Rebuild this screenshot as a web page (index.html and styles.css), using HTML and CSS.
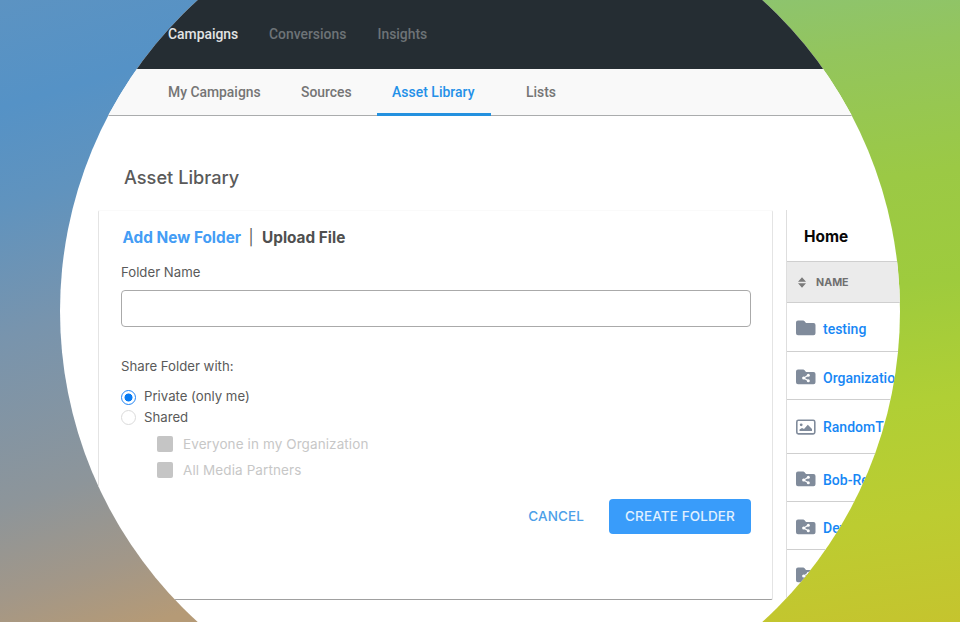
FILE: index.html
```html
<!DOCTYPE html>
<html lang="en">
<head>
<meta charset="utf-8">
<title>Asset Library</title>
<link rel="stylesheet" href="styles.css">
</head>
<body>
<svg class="defs" width="0" height="0" aria-hidden="true">
  <symbol id="folder" viewBox="0 0 20 16"><path d="M2 0.5H7.2Q8 .5 8.6 1.2L10 3H17.5Q19.5 3 19.5 5V13.2Q19.5 15.2 17.5 15.2H2Q0 15.2 0 13.2V2.5Q0 .5 2 .5Z" fill="#808b9b"/></symbol>
  <symbol id="shared" viewBox="0 0 20 16"><use href="#folder"/><path d="M12.3 6.3L7.7 9L12.3 11.8" fill="none" stroke="#fff" stroke-width="1.1"/><g fill="#fff"><circle cx="7.7" cy="9" r="1.6"/><circle cx="12.3" cy="6.3" r="1.5"/><circle cx="12.3" cy="11.8" r="1.5"/></g></symbol>
  <symbol id="image" viewBox="0 0 20 16"><rect x=".8" y="1.3" width="18" height="13.6" rx="1.6" fill="none" stroke="#808b9b" stroke-width="1.6"/><path d="M3.5 12V10.5L6 9L8 10L11.8 5.8L16 10V12Z" fill="#808b9b"/><circle cx="5.2" cy="5.8" r="1.4" fill="#808b9b"/></symbol>
</svg>
<div class="stage">
<div class="app">
  <nav class="topnav"><a class="t1 on">Campaigns</a><a class="t2">Conversions</a><a class="t3">Insights</a></nav>
  <nav class="subnav"><a class="s1">My Campaigns</a><a class="s2">Sources</a><a class="s3 active">Asset Library</a><a class="s4">Lists</a></nav>
  <h1>Asset Library</h1>
  <main class="content">
    <section class="panel">
      <div class="tabs"><a class="add">Add New Folder</a><span class="bar">|</span><a class="upload">Upload File</a></div>
      <label class="label" for="name">Folder Name</label>
      <input id="name" class="field" type="text">
      <p class="label share">Share Folder with:</p>
      <div class="radio"><i class="dot checked"></i><span class="private">Private (only me)</span></div>
      <div class="radio"><i class="dot"></i><span class="shared">Shared</span></div>
      <div class="check first"><i class="box"></i><span class="everyone">Everyone in my Organization</span></div>
      <div class="check"><i class="box"></i><span class="partners">All Media Partners</span></div>
      <div class="actions"><a class="cancel">CANCEL</a><button class="create"><span>CREATE FOLDER</span></button></div>
    </section>
    <section class="list">
      <h2>Home</h2>
      <div class="head"><svg width="8" height="11" viewBox="0 0 8 11"><path d="M0 4.7L4 .2L8 4.7ZM0 6.3H8L4 10.8Z" fill="#7b7b7b"/></svg><span>NAME</span></div>
      <div class="row r1"><svg class="icon"><use href="#folder"/></svg><a>testing</a></div>
      <div class="row r2"><svg class="icon"><use href="#shared"/></svg><a>Organization</a></div>
      <div class="row r3"><svg class="icon"><use href="#image"/></svg><a>RandomTest</a></div>
      <div class="row r4"><svg class="icon"><use href="#shared"/></svg><a>Bob-Re</a></div>
      <div class="row r5"><svg class="icon"><use href="#shared"/></svg><a>Dev</a></div>
      <div class="row r6"><svg class="icon"><use href="#shared"/></svg></div>
    </section>
  </main>
</div>
</div>
</body>
</html>
```
FILE: styles.css
```css
* { box-sizing: border-box; }
body { margin: 0; font-family: Inter, "Liberation Sans", sans-serif; color: #5a5a5a; }
.defs { display: block; }
.stage {
  width: 960px; height: 622px; overflow: hidden;
  background:
    linear-gradient(163deg, #5c93c2 0%, #5592c6 14%, #6093be 27%, #7894ad 44%, #8d959a 66%, #a29788 78%, #b59a76 87%) 0 0 / 480px 622px no-repeat,
    linear-gradient(172deg, #8ac378 0%, #93c55d 15%, #9bc945 34%, #9ecb3d 50%, #b0cf35 67%, #bccc31 84%, #c5c42e 100%) 480px 0 / 480px 622px no-repeat;
}
.app { width: 960px; height: 622px; overflow: hidden; background: #fff; clip-path: circle(420px at 480px 311px); }
.topnav, .subnav { display: flex; align-items: center; font: 500 13.9px Roboto, sans-serif; white-space: nowrap; }
.topnav { height: 69px; padding: 0 0 2px 168px; background: #252d33; color: #6d7377; }
.topnav a { display: block; }
.on { color: #e2e4e5; }
.t1 { width: 101px; }
.t2 { width: 108.5px; }
.subnav { height: 47px; padding-left: 168px; background: #f9f9f9; color: #757575; border-bottom: 1px solid #aaacad; }
.s1 { width: 133px; }
.s2 { width: 76px; }
.s3 { width: 114px; height: 47px; line-height: 46px; border-bottom: 3px solid #2491df; padding-left: 15px; margin-right: 35px; letter-spacing: .05px; }
.active { color: #2390e8; }
h1 { margin: 49px 0 0 124px; font-size: 18.2px; font-weight: 500; line-height: 24px; }
.content { display: flex; gap: 13px; margin: 21px 0 0 98px; }
.panel { width: 675px; height: 390px; padding: 17px 21px 0 22px; border: 1px solid #e4e4e4; border-top-color: #fafafa; border-bottom: 1px solid #a0a0a0; border-radius: 2px; }
.tabs { display: flex; height: 22px; line-height: 20px; font-size: 15.35px; font-weight: 700; padding-left: 1.5px; white-space: nowrap; }
.add { width: 126px; color: #449df5; }
.bar { width: 13.5px; font-weight: 400; }
.upload { color: #4f4f4f; }
.label { display: block; margin: 12px 0 0; font-size: 13.2px; line-height: 20px; }
.field { display: block; width: 630px; height: 37px; margin-top: 8px; border: 1px solid #aaa; border-radius: 4px; background: #fff; }
.share { margin: 29px 0 10px; }
.radio { display: flex; align-items: center; gap: 8px; height: 20.5px; font-size: 13.2px; }
.dot { width: 15px; height: 15px; border: 1px solid #dadada; border-radius: 50%; margin-top: 2px; }
.checked { border-color: #2185f4; background: radial-gradient(circle, #087bf3 0 3.7px, #fff 4.3px); }
.check { display: flex; align-items: center; gap: 10px; height: 26px; margin-left: 36px; font-size: 13.5px; letter-spacing: .1px; color: #c7c7c7; }
.first { margin-top: 4px; }
.box { width: 16px; height: 16px; border-radius: 2px; background: #c5c5c5; }
.actions { display: flex; align-items: center; justify-content: flex-end; gap: 25px; margin-top: 16px; font-size: 13.5px; font-weight: 500; letter-spacing: .12px; }
.cancel, .create span { display: block; margin-top: -2px; }
.cancel { color: #4d9fe8; }
.create { width: 142px; height: 35px; padding: 0; border: 0; border-radius: 4px; background: #399cfa; color: #e0f0ff; font: inherit; letter-spacing: inherit; }
.list { width: 200px; height: 390px; border-left: 1px solid #dedede; }
h2 { margin: 0; padding: 15px 0 0 17px; height: 51px; font-size: 15.4px; line-height: 24px; font-weight: 700; color: #080808; }
.head { display: flex; align-items: center; gap: 10px; height: 42px; padding: 1px 0 0 11px; background: #ebebeb; border: 1px solid #cfcfcf; border-left: 0; font-size: 10.7px; font-weight: 700; color: #707070; }
.row { display: flex; align-items: center; gap: 7px; height: 48px; padding-left: 9px; border-bottom: 1px solid #cfcfcf; font: 500 14px Roboto, sans-serif; color: #1787f5; white-space: nowrap; }
.icon { display: block; width: 20px; height: 16px; margin-top: 2px; }
.row a { padding-top: 4px; }
.r1 { height: 49px; }
.r1 a { padding-top: 3px; }
.r3 { height: 54px; }
.r3 .icon { margin-top: 0; }
.r3 a { padding-top: 0; }
.r6 { border: 0; }
```
